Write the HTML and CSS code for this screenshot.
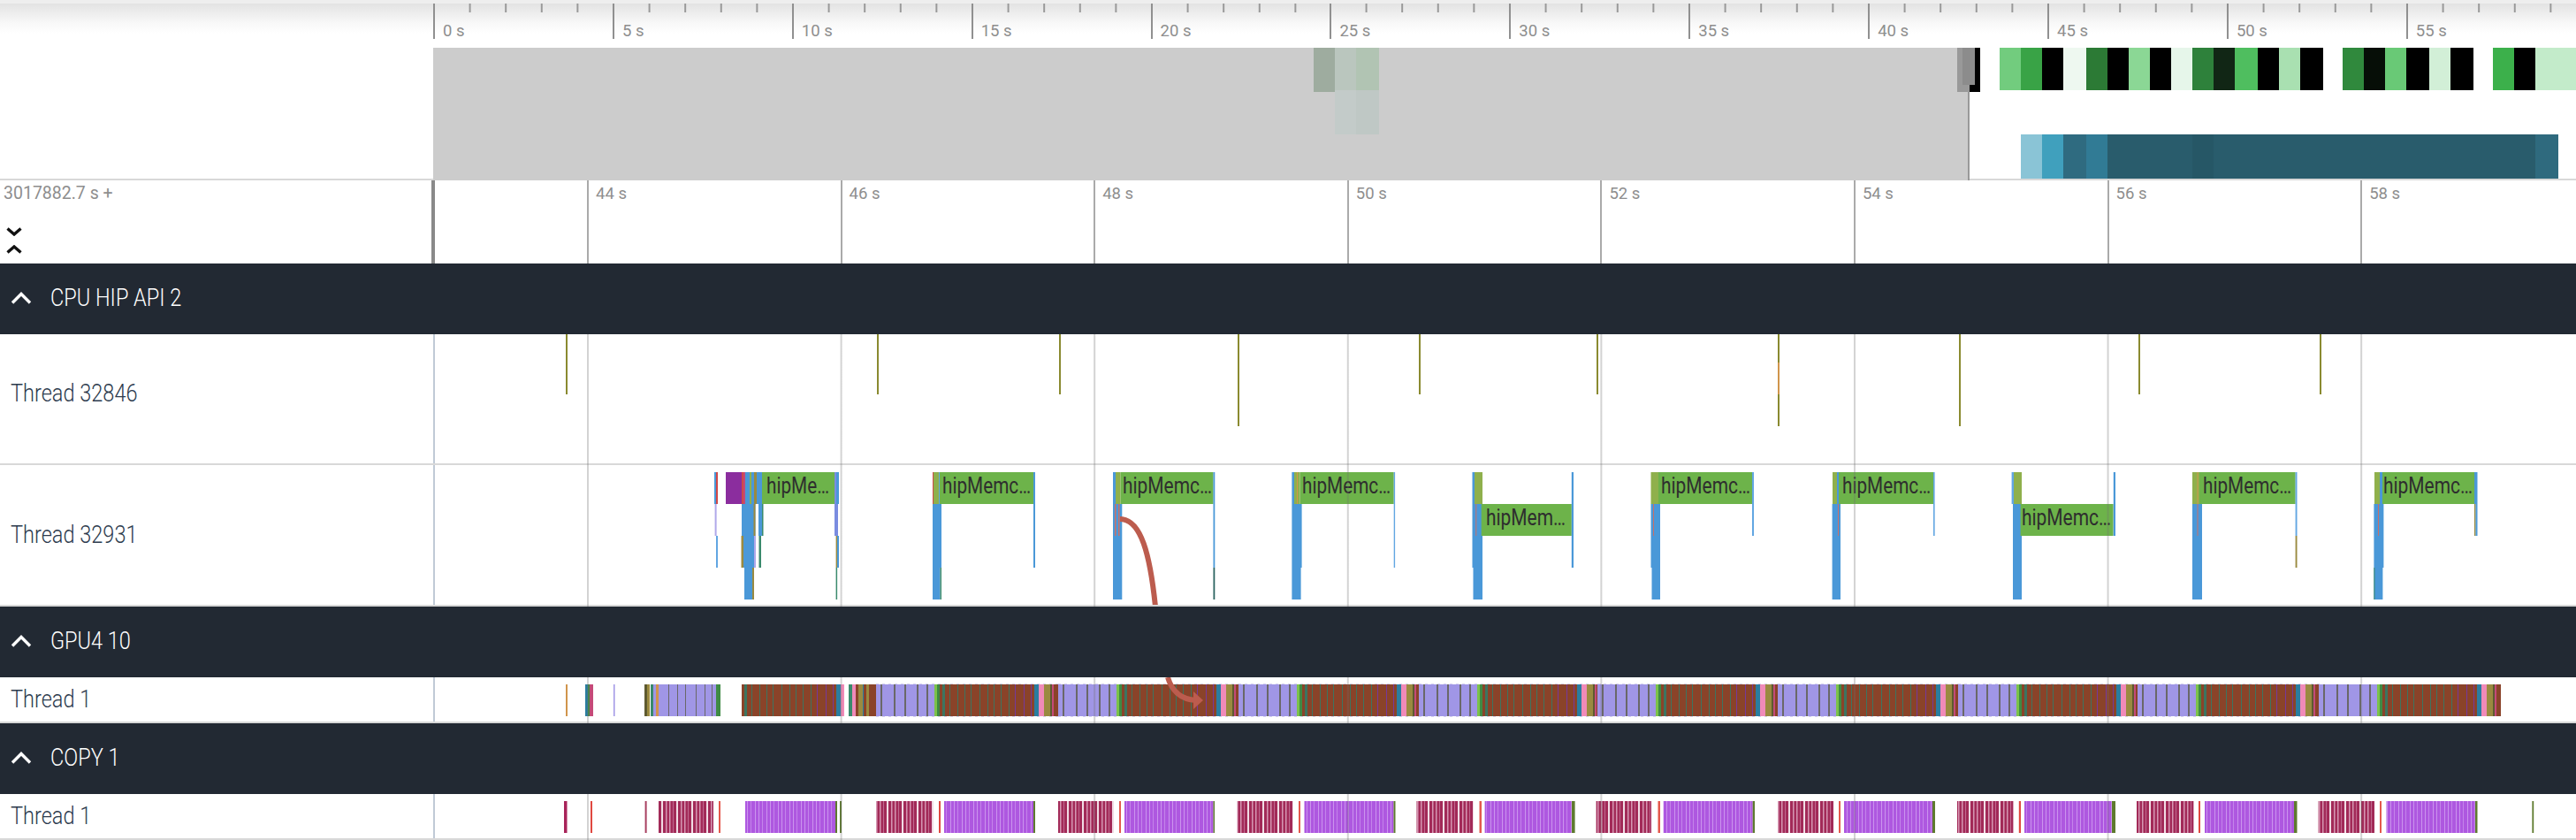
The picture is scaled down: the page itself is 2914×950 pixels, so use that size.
FILE: index.html
```html
<!DOCTYPE html>
<html lang="en">
<head>
<meta charset="utf-8">
<title>Timeline trace</title>
<link rel="stylesheet" href="styles.css">
</head>
<body>
<div class="app">
  <div class="topbar"></div>
  <div class="ruler">
    <div class="gutter"></div>
    <div class="ruler-axis">
      <div class="sec"><span>0 s</span></div><div class="sec"><span>5 s</span></div><div class="sec"><span>10 s</span></div><div class="sec"><span>15 s</span></div><div class="sec"><span>20 s</span></div><div class="sec"><span>25 s</span></div><div class="sec"><span>30 s</span></div><div class="sec"><span>35 s</span></div><div class="sec"><span>40 s</span></div><div class="sec"><span>45 s</span></div><div class="sec"><span>50 s</span></div><div class="sec"><span>55 s</span></div>
    </div>
  </div>
  <div class="overview">
    <div class="gutter"></div>
    <svg class="lane" width="2424" height="150" viewBox="490 54 2424 150">
      <rect x="490" y="54" width="1736" height="150" fill="#cccccc"/>
      <rect x="1486" y="54" width="24" height="50" fill="#9eac9f"/>
      <rect x="1510" y="54" width="24" height="48" fill="#bac6be"/>
      <rect x="1534" y="54" width="26" height="48" fill="#b1c4b3"/>
      <rect x="1510" y="102" width="24" height="50" fill="#c3cbc9"/>
      <rect x="1534" y="102" width="26" height="50" fill="#bfc8c5"/>
      <rect x="2214" y="54" width="20" height="50" fill="#999999"/>
      <rect x="2220" y="54" width="14" height="42" fill="#8c8c8c"/>
      <rect x="2234" y="54" width="6" height="50" fill="#000000"/>
      <rect x="2228" y="96" width="12" height="8" fill="#000000"/>
      <rect x="2226" y="104" width="2" height="100" fill="#999999"/>
      <rect x="2228" y="202" width="686" height="2" fill="#d8d8d8"/>
      <g>
        <rect x="2262" y="54" width="24" height="48" fill="#72cc7e"/>
        <rect x="2286" y="54" width="24" height="48" fill="#39a346"/>
        <rect x="2310" y="54" width="24" height="48" fill="#000000"/>
        <rect x="2334" y="54" width="26" height="48" fill="#eef8f0"/>
        <rect x="2360" y="54" width="24" height="48" fill="#2c7a35"/>
        <rect x="2384" y="54" width="24" height="48" fill="#000000"/>
        <rect x="2408" y="54" width="24" height="48" fill="#8bd795"/>
        <rect x="2432" y="54" width="24" height="48" fill="#000000"/>
        <rect x="2456" y="54" width="24" height="48" fill="#e6f6ea"/>
        <rect x="2480" y="54" width="24" height="48" fill="#2e813b"/>
        <rect x="2504" y="54" width="24" height="48" fill="#112615"/>
        <rect x="2528" y="54" width="26" height="48" fill="#4fbe5f"/>
        <rect x="2554" y="54" width="24" height="48" fill="#000000"/>
        <rect x="2578" y="54" width="24" height="48" fill="#a9e0b1"/>
        <rect x="2602" y="54" width="26" height="48" fill="#000000"/>
        <rect x="2650" y="54" width="24" height="48" fill="#30893d"/>
        <rect x="2674" y="54" width="24" height="48" fill="#060e07"/>
        <rect x="2698" y="54" width="24" height="48" fill="#69c976"/>
        <rect x="2722" y="54" width="26" height="48" fill="#000000"/>
        <rect x="2748" y="54" width="24" height="48" fill="#d2efd7"/>
        <rect x="2772" y="54" width="26" height="48" fill="#000000"/>
        <rect x="2820" y="54" width="24" height="48" fill="#3cb04b"/>
        <rect x="2844" y="54" width="24" height="48" fill="#000000"/>
        <rect x="2868" y="54" width="46" height="48" fill="#c3ebca"/>
      </g>
      <g>
        <rect x="2286" y="152" width="24" height="50" fill="#8ac4d6"/>
        <rect x="2310" y="152" width="24" height="50" fill="#40a0bd"/>
        <rect x="2334" y="152" width="26" height="50" fill="#2f6b80"/>
        <rect x="2360" y="152" width="24" height="50" fill="#317b95"/>
        <rect x="2384" y="152" width="96" height="50" fill="#295c6c"/>
        <rect x="2480" y="152" width="24" height="50" fill="#265766"/>
        <rect x="2504" y="152" width="364" height="50" fill="#295c6c"/>
        <rect x="2868" y="152" width="26" height="50" fill="#2f6a7e"/>
      </g>
    </svg>
  </div>
  <div class="timehead">
    <div class="timehead-left">
      <span class="offset">3017882.7 s +</span>
      <div class="expanders">
        <svg class="expander" width="18" height="10" viewBox="0 0 18 10"><path d="M1.5 1.5 9 8l7.5-6.5"/></svg>
        <svg class="expander" width="18" height="10" viewBox="0 0 18 10"><path d="M1.5 8.5 9 2l7.5 6.5"/></svg>
      </div>
    </div>
    <div class="time-axis">
      <div class="tick-lead"></div>
      <div class="tick"><span>44 s</span></div><div class="tick"><span>46 s</span></div><div class="tick"><span>48 s</span></div><div class="tick"><span>50 s</span></div><div class="tick"><span>52 s</span></div><div class="tick"><span>54 s</span></div><div class="tick"><span>56 s</span></div><div class="tick"><span>58 s</span></div>
    </div>
  </div>

  <div class="section">
    <svg class="chevron" width="24" height="14" viewBox="0 0 24 14"><path d="M2 12.5 12 2.5l10 10"/></svg>
    <span class="name">CPU HIP API 2</span>
  </div>
  <div class="row row-a">
    <div class="label"><span class="name">Thread 32846</span></div>
    <div class="track">
      <svg class="lane" width="2424" height="146" viewBox="490 378 2424 146">
        <g class="olive">
          <rect x="640" y="378" width="2" height="68"/>
          <rect x="992" y="378" width="2" height="68"/>
          <rect x="1198" y="378" width="2" height="68"/>
          <rect x="1400" y="378" width="2" height="104"/>
          <rect x="1605" y="378" width="2" height="68"/>
          <rect x="1806" y="378" width="2" height="68"/>
          <rect x="2011" y="378" width="2" height="104"/>
          <rect x="2216" y="378" width="2" height="104"/>
          <rect x="2419" y="378" width="2" height="68"/>
          <rect x="2624" y="378" width="2" height="68"/>
        </g>
        <rect class="orange" x="2011" y="410" width="2" height="36"/>
      </svg>
    </div>
  </div>
  <div class="row row-b">
    <div class="label"><span class="name">Thread 32931</span></div>
    <div class="track">
      <svg class="lane" width="2424" height="158" viewBox="490 526 2424 158">
        <!-- group 0 -->
        <rect class="blue" x="808" y="534" width="4" height="36"/>
        <rect class="red" x="810" y="534" width="2" height="36"/>
        <rect class="lav" x="808.6" y="570" width="2" height="36"/>
        <rect class="lblue" x="810" y="606" width="2" height="36"/>
        <rect class="purple" x="821" y="534" width="18" height="36"/>
        <rect class="blue" x="839" y="534" width="23" height="36"/>
        <rect class="red" x="839" y="534" width="2" height="36"/>
        <rect class="pink" x="841" y="534" width="2" height="36"/>
        <rect class="ol" x="848" y="534" width="2" height="36"/>
        <rect class="mud" x="853" y="534" width="3" height="36"/>
        <rect class="green" x="862" y="534" width="82" height="36"/>
        <rect class="lav2" x="944" y="534" width="2" height="36"/>
        <rect class="blue" x="946" y="534" width="3" height="36"/>
        <rect class="blue" x="839" y="570" width="15.5" height="36"/>
        <rect class="mud" x="852.5" y="570" width="2" height="36"/>
        <rect class="blue" x="858" y="570" width="4" height="36"/>
        <rect class="teal" x="862" y="570" width="1.5" height="36"/>
        <rect class="lav2" x="944" y="570" width="4" height="36"/>
        <rect class="mud" x="838.5" y="606" width="2.5" height="36"/>
        <rect class="blue" x="841" y="606" width="13" height="36"/>
        <rect class="lav" x="853" y="606" width="2" height="36"/>
        <rect class="teal" x="858.5" y="606" width="2.5" height="36"/>
        <rect class="mud" x="945.6" y="606" width="1.5" height="36"/>
        <rect class="blue" x="947" y="606" width="2" height="36"/>
        <rect class="blue" x="842" y="642" width="9" height="36"/>
        <rect class="mud" x="851" y="642" width="2" height="36"/>
        <rect class="teal" x="945.6" y="642" width="1.5" height="36"/>
        <text class="call" x="867" y="558" textLength="71" lengthAdjust="spacingAndGlyphs">hipMe…</text>
        <!-- group 1 -->
        <rect class="ol" x="1055" y="534" width="8" height="36"/>
        <rect class="red" x="1055" y="534" width="1" height="36"/>
        <rect class="lblue" x="1062" y="534" width="1" height="36"/>
        <rect class="green" x="1063" y="534" width="106" height="36"/>
        <rect class="blue" x="1169" y="534" width="2" height="108"/>
        <rect class="blue" x="1055" y="570" width="10" height="72"/>
        <rect class="blue" x="1055" y="642" width="8.5" height="36"/>
        <rect class="teal" x="1063.5" y="642" width="1.5" height="36"/>
        <text class="call" x="1066" y="558" textLength="100" lengthAdjust="spacingAndGlyphs">hipMemc…</text>
        <!-- group 2 -->
        <rect class="blue" x="1259" y="534" width="3" height="36"/>
        <rect class="ol" x="1262" y="534" width="5.5" height="36"/>
        <rect class="green" x="1267.5" y="534" width="105" height="36"/>
        <rect class="blue" x="1372.5" y="534" width="1.8" height="108"/>
        <rect class="dteal" x="1372.5" y="642" width="1.8" height="36"/>
        <rect class="blue" x="1259" y="570" width="10.3" height="108"/>
        <rect class="salmon" x="1261" y="570" width="1.5" height="36"/>
        <rect class="salmon" x="1265" y="570" width="1.5" height="36"/>
        <text class="call" x="1270" y="558" textLength="101" lengthAdjust="spacingAndGlyphs">hipMemc…</text>
        <!-- group 3 -->
        <rect class="blue" x="1461.4" y="534" width="2.6" height="36"/>
        <rect class="ol" x="1464" y="534" width="6.6" height="36"/>
        <rect class="orange" x="1467" y="534" width="1" height="36"/>
        <rect class="green" x="1470.6" y="534" width="106.1" height="36"/>
        <rect class="lblue" x="1576.7" y="534" width="1.4" height="108"/>
        <rect class="blue" x="1461.4" y="570" width="11.2" height="72"/>
        <rect class="blue" x="1461.4" y="642" width="10.2" height="36"/>
        <text class="call" x="1473" y="558" textLength="100" lengthAdjust="spacingAndGlyphs">hipMemc…</text>
        <!-- group 4 -->
        <rect class="blue" x="1665.5" y="534" width="2.5" height="36"/>
        <rect class="ol" x="1668" y="534" width="9" height="36"/>
        <rect class="blue" x="1665.5" y="570" width="11.5" height="72"/>
        <rect class="blue" x="1666.5" y="642" width="10.5" height="36"/>
        <rect class="salmon" x="1669.3" y="570" width="1" height="36"/>
        <rect class="green" x="1675.7" y="570" width="102.1" height="36"/>
        <rect class="blue" x="1777.8" y="534" width="2.2" height="108"/>
        <text class="call" x="1681" y="594" textLength="90" lengthAdjust="spacingAndGlyphs">hipMem…</text>
        <!-- group 5 -->
        <rect class="ol" x="1867.5" y="534" width="8.5" height="36"/>
        <rect class="green" x="1876" y="534" width="106" height="36"/>
        <rect class="lblue" x="1982" y="534" width="2" height="72"/>
        <rect class="blue" x="1867.5" y="570" width="10.5" height="72"/>
        <rect class="blue" x="1868.5" y="642" width="9.5" height="36"/>
        <rect class="salmon" x="1870" y="570" width="1" height="36"/>
        <text class="call" x="1879" y="558" textLength="101" lengthAdjust="spacingAndGlyphs">hipMemc…</text>
        <!-- group 6 -->
        <rect class="ol" x="2073" y="534" width="5" height="36"/>
        <rect class="blue" x="2078" y="534" width="2" height="36"/>
        <rect class="green" x="2080" y="534" width="107" height="36"/>
        <rect class="lblue" x="2187" y="534" width="1.6" height="72"/>
        <rect class="blue" x="2072.6" y="570" width="9.4" height="108"/>
        <rect class="salmon" x="2079" y="570" width="1" height="36"/>
        <text class="call" x="2084" y="558" textLength="100" lengthAdjust="spacingAndGlyphs">hipMemc…</text>
        <!-- group 7 -->
        <rect class="lblue" x="2275.6" y="534" width="2.4" height="36"/>
        <rect class="ol" x="2278" y="534" width="9" height="36"/>
        <rect class="blue" x="2277" y="570" width="10" height="108"/>
        <rect class="green" x="2285.6" y="570" width="105" height="36"/>
        <rect class="blue" x="2390.8" y="534" width="2.2" height="72"/>
        <text class="call" x="2287" y="594" textLength="101" lengthAdjust="spacingAndGlyphs">hipMemc…</text>
        <!-- group 8 -->
        <rect class="ol" x="2480" y="534" width="8" height="36"/>
        <rect class="orange" x="2485.5" y="534" width="1" height="72"/>
        <rect class="green" x="2488" y="534" width="108.6" height="36"/>
        <rect class="lblue" x="2596.6" y="534" width="1.9" height="72"/>
        <rect class="mud" x="2596.6" y="606" width="1.9" height="36"/>
        <rect class="blue" x="2480" y="570" width="11" height="108"/>
        <rect class="salmon" x="2485.5" y="570" width="1" height="36"/>
        <text class="call" x="2492" y="558" textLength="100" lengthAdjust="spacingAndGlyphs">hipMemc…</text>
        <!-- group 9 -->
        <rect class="ol" x="2686" y="534" width="6" height="36"/>
        <rect class="blue" x="2692" y="534" width="3" height="36"/>
        <rect class="green" x="2695" y="534" width="104" height="36"/>
        <rect class="blue" x="2799" y="534" width="3.5" height="36"/>
        <rect class="mud" x="2799" y="570" width="1.5" height="36"/>
        <rect class="blue" x="2800.5" y="570" width="2" height="36"/>
        <rect class="blue" x="2685.4" y="570" width="11" height="72"/>
        <rect class="salmon" x="2690" y="570" width="1" height="36"/>
        <rect class="blue" x="2685.4" y="642" width="10" height="36"/>
        <rect class="teal" x="2685.4" y="642" width="1" height="36"/>
        <text class="call" x="2696" y="558" textLength="101" lengthAdjust="spacingAndGlyphs">hipMemc…</text>
        <path class="flow" d="M1267 587C1291 587 1301 628 1307 686"/>
      </svg>
    </div>
  </div>

  <div class="section">
    <svg class="chevron" width="24" height="14" viewBox="0 0 24 14"><path d="M2 12.5 12 2.5l10 10"/></svg>
    <span class="name">GPU4 10</span>
  </div>
  <div class="row row-c">
    <div class="label"><span class="name">Thread 1</span></div>
    <div class="track">
      <svg class="lane" width="2424" height="50" viewBox="490 766 2424 50">
        <defs>
          <g id="gpu-lav">
            <rect class="lavb" x="0" y="774" width="66" height="36"/>
            <rect class="gline" x="5" y="774" width="2" height="36"/>
            <rect class="gline" x="20" y="774" width="2" height="36"/>
            <rect class="gline" x="32" y="774" width="2" height="36"/>
            <rect class="gline" x="46" y="774" width="2" height="36"/>
            <rect class="gline" x="57" y="774" width="2" height="36"/>
          </g>
          <g id="gpu-tail">
            <rect class="lime" x="0" y="774" width="3" height="36"/>
            <rect class="bgreen" x="3" y="774" width="3" height="36"/>
            <rect class="brown" x="6" y="774" width="110" height="36"/>
            <rect class="tline" x="9" y="774" width="3" height="36"/>
            <rect class="tline" x="17" y="774" width="1" height="36"/>
            <rect class="tline" x="26" y="774" width="1" height="36"/>
            <rect class="tline" x="34" y="774" width="1" height="36"/>
            <rect class="tline" x="41" y="774" width="1" height="36"/>
            <rect class="tline" x="51" y="774" width="1" height="36"/>
            <rect class="tline" x="60" y="774" width="1" height="36"/>
            <rect class="tline" x="67" y="774" width="1" height="36"/>
            <rect class="tline" x="75" y="774" width="1" height="36"/>
            <rect class="tline" x="84" y="774" width="1" height="36"/>
            <rect class="vline" x="91" y="774" width="1" height="36"/>
            <rect class="vline" x="101" y="774" width="1" height="36"/>
            <rect class="vline" x="109" y="774" width="1" height="36"/>
            <rect class="cblue" x="113" y="774" width="5" height="36"/>
            <rect class="hot" x="118" y="774" width="6" height="36"/>
            <rect class="mud" x="124" y="774" width="7" height="36"/>
            <rect class="dmud" x="131" y="774" width="2" height="36"/>
            <rect class="brown" x="133" y="774" width="7" height="36"/>
            <rect class="pink" x="133" y="774" width="2" height="36"/>
          </g>
          <g id="gpu-cycle">
            <use href="#gpu-lav"/>
            <use href="#gpu-tail" x="66"/>
            <path class="dots" d="M0 773.5H206M0 810.5H206"/>
          </g>
        </defs>
        <rect class="orange" x="640" y="774" width="2" height="36"/>
        <rect class="cblue" x="662" y="774" width="3" height="36"/>
        <rect class="bgreen" x="665" y="774" width="2" height="36"/>
        <rect class="pink" x="667" y="774" width="4" height="36"/>
        <rect class="lavb" x="694" y="774" width="1.5" height="36"/>
        <rect class="dmud" x="729" y="774" width="3" height="36"/>
        <rect class="mud" x="732" y="774" width="3" height="36"/>
        <rect class="teal" x="736" y="774" width="3" height="36"/>
        <rect class="lavb" x="739" y="774" width="3" height="36"/>
        <rect class="orange" x="742" y="774" width="3" height="36"/>
        <rect class="lavb" x="745" y="774" width="65" height="36"/>
        <rect class="gline" x="756" y="774" width="1" height="36"/>
        <rect class="gline" x="766" y="774" width="1" height="36"/>
        <rect class="gline" x="775" y="774" width="1" height="36"/>
        <rect class="gline" x="787" y="774" width="1" height="36"/>
        <rect class="gline" x="797" y="774" width="1" height="36"/>
        <rect class="gline" x="805" y="774" width="1" height="36"/>
        <rect class="bgreen" x="810" y="774" width="5" height="36"/>
        <use href="#gpu-tail" x="833"/>
        <rect class="wipe" x="833" y="774" width="6" height="36"/>
        <rect class="wipe" x="955" y="774" width="5" height="36"/>
        <rect class="teal" x="960" y="774" width="4" height="36"/>
        <rect class="hot" x="964" y="774" width="4" height="36"/>
        <rect class="brown" x="968" y="774" width="3" height="36"/>
        <rect class="mud" x="971" y="774" width="5" height="36"/>
        <rect class="cblue" x="976" y="774" width="1" height="36"/>
        <rect class="brown" x="977" y="774" width="3" height="36"/>
        <rect class="mud" x="980" y="774" width="3" height="36"/>
        <rect class="brown" x="983" y="774" width="8" height="36"/>
        <use href="#gpu-cycle" x="991"/>
        <use href="#gpu-cycle" x="1197"/>
        <use href="#gpu-cycle" x="1401"/>
        <use href="#gpu-cycle" x="1605"/>
        <use href="#gpu-cycle" x="1807"/>
        <use href="#gpu-cycle" x="2011"/>
        <use href="#gpu-cycle" x="2215"/>
        <use href="#gpu-cycle" x="2418"/>
        <use href="#gpu-lav" x="2623"/>
        <use href="#gpu-tail" x="2689"/>
        <path class="flow" d="M1321 766C1325 780 1335 791 1353 792"/>
        <polygon class="flow-head" points="1350,782 1361,792 1350,802"/>
      </svg>
    </div>
  </div>

  <div class="section">
    <svg class="chevron" width="24" height="14" viewBox="0 0 24 14"><path d="M2 12.5 12 2.5l10 10"/></svg>
    <span class="name">COPY 1</span>
  </div>
  <div class="row row-c">
    <div class="label"><span class="name">Thread 1</span></div>
    <div class="track">
      <svg class="lane" width="2424" height="50" viewBox="490 898 2424 50">
        <defs>
          <pattern id="crimson" patternUnits="userSpaceOnUse" x="0" y="0" width="17" height="36">
            <rect width="17" height="36" fill="#a22a58"/>
            <rect x="0" width="2" height="36" fill="#f0dce4"/>
            <rect x="5" width="1.5" height="36" fill="#d596b2"/>
            <rect x="9" width="1.5" height="36" fill="#d596b2"/>
            <rect x="13" width="1" height="36" fill="#c06a90"/>
          </pattern>
          <pattern id="violet" patternUnits="userSpaceOnUse" x="0" y="0" width="13" height="36">
            <rect width="13" height="36" fill="#ae58e0"/>
            <rect x="0" width="1" height="36" fill="#cb94ee"/>
            <rect x="4" width="1" height="36" fill="#c484ea"/>
            <rect x="9" width="1" height="36" fill="#cb94ee"/>
          </pattern>
        </defs>
        <g class="bars">
          <rect x="638" width="3.5" fill="#a8245a"/>
          <rect x="668" width="2" fill="#e04840"/>
          <rect x="729.6" width="2" fill="#a84060"/>
          <rect x="745" width="62" fill="url(#crimson)"/>
          <rect x="813" width="2" fill="#e4584c"/>
          <rect x="843" width="102" fill="url(#violet)"/>
          <rect x="945" width="2" fill="#5e7a2e"/>
          <rect x="950" width="2" fill="#5e7a2e"/>
          <rect x="991" width="65" fill="url(#crimson)"/>
          <rect x="1062" width="2" fill="#e04840"/>
          <rect x="1068" width="101" fill="url(#violet)"/>
          <rect x="1169" width="2" fill="#5e7a2e"/>
          <rect x="1197" width="63" fill="url(#crimson)"/>
          <rect x="1266" width="2" fill="#e4584c"/>
          <rect x="1272" width="100.5" fill="url(#violet)"/>
          <rect x="1372.5" width="1.5" fill="#5e7a2e"/>
          <rect x="1399.5" width="63.5" fill="url(#crimson)"/>
          <rect x="1469" width="2" fill="#e4584c"/>
          <rect x="1475.5" width="101" fill="url(#violet)"/>
          <rect x="1576.5" width="2" fill="#5e7a2e"/>
          <rect x="1602.5" width="64.5" fill="url(#crimson)"/>
          <rect x="1673.5" width="2.5" fill="#e4584c"/>
          <rect x="1679.6" width="98.4" fill="url(#violet)"/>
          <rect x="1778" width="3.6" fill="#5e7a2e"/>
          <rect x="1805.6" width="62.4" fill="url(#crimson)"/>
          <rect x="1875.5" width="2.5" fill="#e4584c"/>
          <rect x="1881.6" width="101.1" fill="url(#violet)"/>
          <rect x="1982.7" width="2.3" fill="#5e7a2e"/>
          <rect x="2011" width="63" fill="url(#crimson)"/>
          <rect x="2080" width="2" fill="#e4584c"/>
          <rect x="2086" width="100" fill="url(#violet)"/>
          <rect x="2186" width="3" fill="#5e7a2e"/>
          <rect x="2214" width="63.4" fill="url(#crimson)"/>
          <rect x="2283.8" width="2.2" fill="#e04840"/>
          <rect x="2290" width="99" fill="url(#violet)"/>
          <rect x="2389" width="4" fill="#5e7a2e"/>
          <rect x="2417" width="64.4" fill="url(#crimson)"/>
          <rect x="2487" width="2" fill="#e04840"/>
          <rect x="2494" width="101" fill="url(#violet)"/>
          <rect x="2595" width="3.5" fill="#5e7a2e"/>
          <rect x="2622.6" width="63.4" fill="url(#crimson)"/>
          <rect x="2692" width="2" fill="#e4584c"/>
          <rect x="2699.5" width="100.5" fill="url(#violet)"/>
          <rect x="2800" width="2.5" fill="#5e7a2e"/>
          <rect x="2864.4" width="1.8" fill="#5e7a2e"/>
        </g>
      </svg>
    </div>
  </div>
</div>
</body>
</html>
```
FILE: styles.css
```css
html, body {
  margin: 0;
  padding: 0;
  background: #fff;
}
.app {
  width: 2914px;
  height: 950px;
  overflow: hidden;
  display: flex;
  flex-direction: column;
  font-family: Roboto, "Liberation Sans", sans-serif;
}
.topbar {
  height: 4px;
  background: #eeeeee;
  flex: none;
}
.gutter {
  width: 490px;
  flex: none;
}
.ruler {
  height: 50px;
  flex: none;
  display: flex;
  background: linear-gradient(#e3e3e3, #f8f8f8 22px, #fff 34px);
  overflow: hidden;
}
.ruler-axis {
  flex: 1;
  display: flex;
  min-width: 0;
  overflow: hidden;
}
.sec {
  flex: none;
  width: 202.9px;
  height: 40px;
  box-sizing: border-box;
  padding-left: 1px;
  background:
    linear-gradient(to right, #909090 2px, transparent 2px) 0 0 / 2px 100% no-repeat,
    linear-gradient(to right, #999 2px, transparent 2px) 40.6px 0 / 40.6px 10px repeat-x;
}
.sec span {
  display: block;
  margin: 21px 0 0 10px;
  font-size: 18.5px;
  line-height: 20px;
  color: #8e8e8e;
}
.overview {
  height: 150px;
  flex: none;
  display: flex;
  box-shadow: inset 0 -2px 0 #d8d8d8;
}
.lane {
  display: block;
  flex: none;
}
.timehead {
  height: 94px;
  flex: none;
  display: flex;
}
.timehead-left {
  width: 490px;
  flex: none;
  display: flex;
  flex-direction: column;
  justify-content: space-between;
  padding: 5px 0 11px 4px;
  box-sizing: border-box;
}
.offset {
  font-size: 19.5px;
  line-height: 20px;
  color: #8e8e8e;
}
.expanders {
  display: flex;
  flex-direction: column;
  gap: 10px;
  padding-left: 3px;
}
.expander {
  display: block;
}
.expander path {
  fill: none;
  stroke: #111;
  stroke-width: 3.4;
}
.time-axis {
  flex: 1;
  min-width: 0;
  display: flex;
}
.tick-lead {
  flex: none;
  width: 176px;
  margin-left: -2px;
  box-sizing: border-box;
  border-left: 4px solid #8a8a8a;
}
.tick {
  flex: none;
  width: 286.6px;
  box-sizing: border-box;
  border-left: 2px solid #aaa;
  padding: 5px 0 0 8px;
}
.tick span {
  display: block;
  font-size: 18.5px;
  line-height: 20px;
  color: #8e8e8e;
}
.section {
  height: 80px;
  flex: none;
  display: flex;
  align-items: center;
  gap: 21px;
  padding: 0 0 2px 12px;
  box-sizing: border-box;
  background: #222933;
  color: #fff;
}
.chevron {
  display: block;
  flex: none;
}
.chevron path {
  fill: none;
  stroke: #fff;
  stroke-width: 3.4;
}
.name {
  display: block;
  font-size: 28px;
  line-height: 34px;
  font-weight: 300;
  white-space: nowrap;
  transform: scaleX(0.84);
  transform-origin: left center;
}
.row {
  display: flex;
  flex: none;
  box-sizing: border-box;
  border-bottom: 2px solid #d8d8d8;
}
.row-a { height: 148px; }
.row-b { height: 160px; }
.row-c { height: 52px; }
.label {
  width: 490px;
  flex: none;
  display: flex;
  align-items: center;
  padding-left: 12px;
  box-sizing: border-box;
  color: #2d3b4e;
}
.row-a .label { padding-bottom: 12px; }
.track {
  position: relative;
  flex: 1;
  min-width: 0;
  box-shadow: inset 2px 0 0 #c0cad6;
}
.track::after {
  content: "";
  position: absolute;
  inset: 0 0 -2px 0;
  pointer-events: none;
  background: linear-gradient(to right, rgba(110, 110, 110, 0.3) 2px, transparent 2px) 174px 0 / 286.6px 100% repeat-x;
}
.olive { fill: #8a8a30; }
.orange { fill: #d0954c; }
.blue { fill: #4a98d8; }
.lblue { fill: #62a6e2; }
.red { fill: #d04848; }
.pink { fill: #c44a78; }
.lav { fill: #b0a8ea; }
.lav2 { fill: #7a8ce0; }
.purple { fill: #8b2d9e; }
.green { fill: #6db34a; }
.ol { fill: #8fb04c; }
.mud { fill: #9a8a40; }
.dmud { fill: #5e5a30; }
.teal { fill: #3a8a6c; }
.dteal { fill: #2c6460; }
.salmon { fill: #c8706a; }
.call {
  font-family: Roboto, "Liberation Sans", sans-serif;
  font-size: 26px;
  fill: #2e2e2e;
}
.flow {
  fill: none;
  stroke: #bc5c4e;
  stroke-width: 6;
}
.flow-head { fill: #bc5c4e; }
.lavb { fill: #a096e6; }
.gline { fill: #6a6868; }
.brown { fill: #8a4329; }
.tline { fill: #3c7560; }
.vline { fill: #76389c; }
.lime { fill: #7cc24a; }
.bgreen { fill: #3f8a44; }
.cblue { fill: #2a7da0; }
.hot { fill: #f08ab8; }
.wipe { fill: #fff; }
.dots {
  fill: none;
  stroke: #d8d4f0;
  stroke-width: 1;
  stroke-dasharray: 3 4;
}
.bars rect {
  y: 906px;
  height: 36px;
}
```
